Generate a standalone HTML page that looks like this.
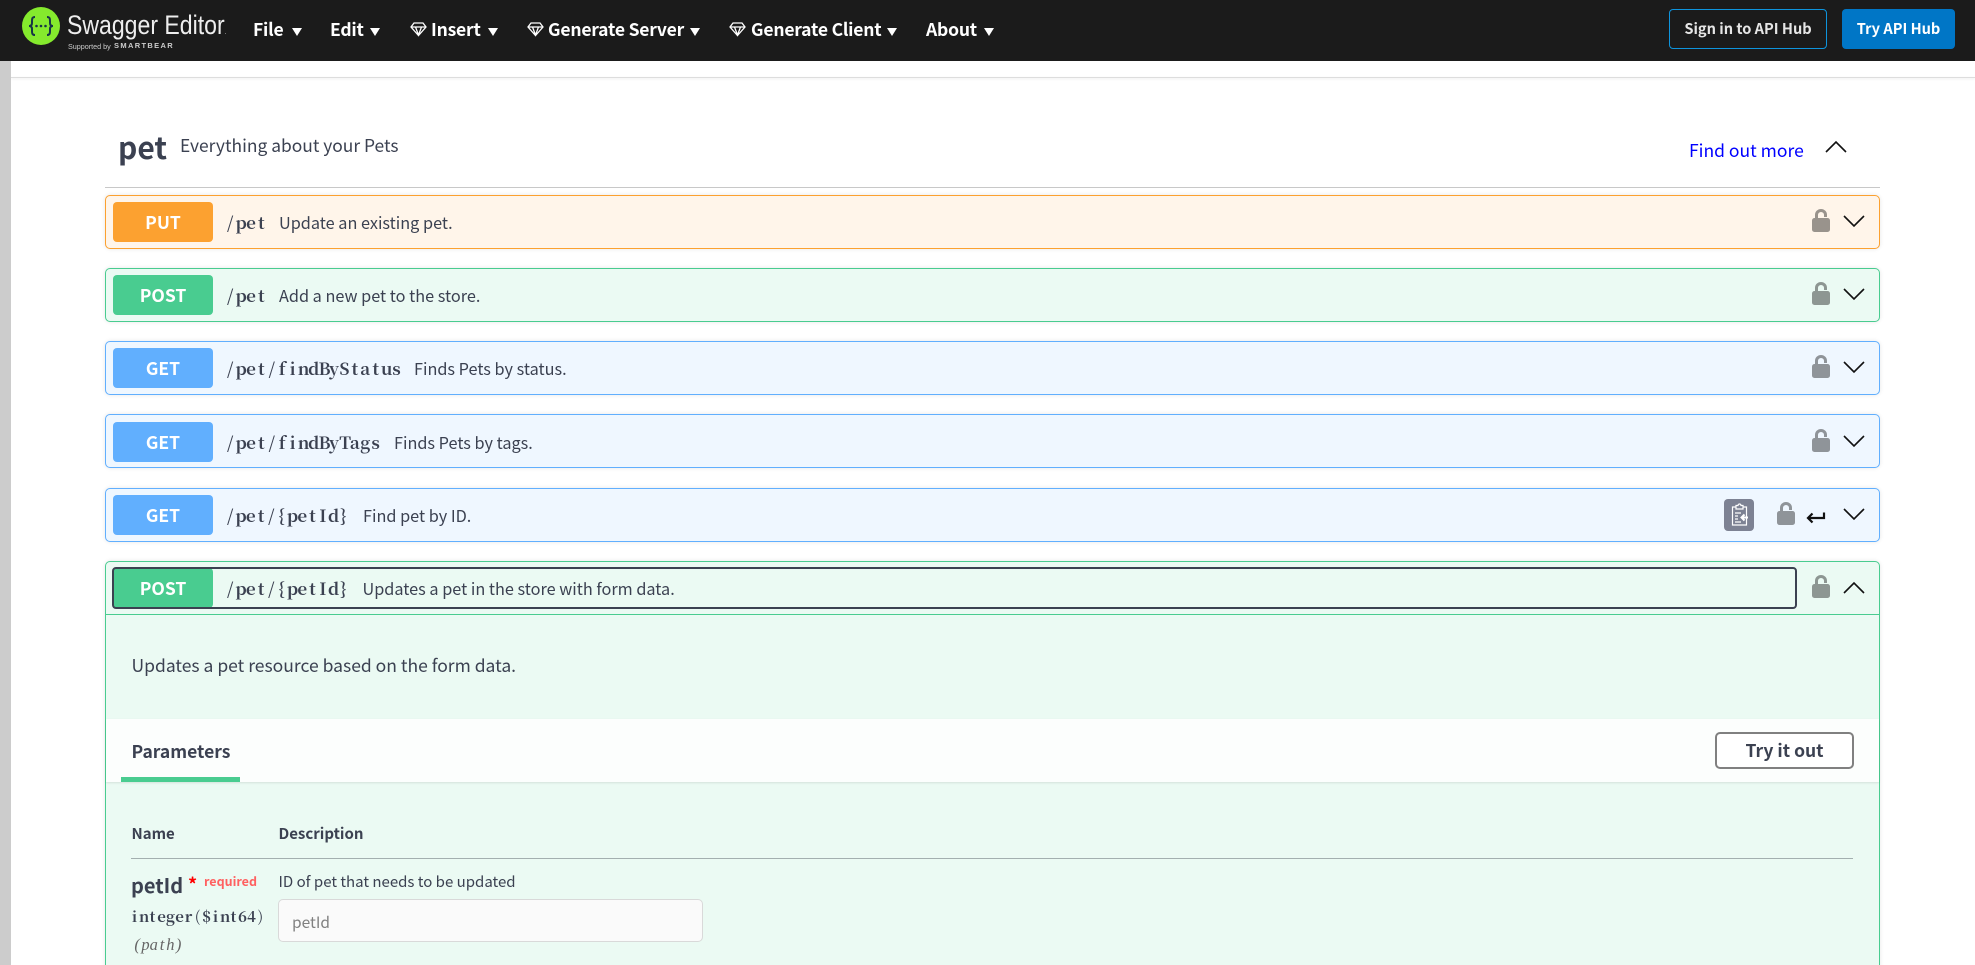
<!DOCTYPE html>
<html><head><meta charset="utf-8"><title>Swagger Editor</title>
<style>
html,body{margin:0;padding:0;width:1975px;height:965px;overflow:hidden;background:#fff}
body{position:relative;font-family:"Noto Sans CJK SC","Liberation Sans",sans-serif;color:#3b4151}
.a,.a *{box-sizing:border-box}
.a{position:absolute}
.t{position:absolute;white-space:nowrap;line-height:24px;height:24px}
.nav{left:0;top:0;width:1975px;height:61px;background:#1b1b1b}
.n{color:#fff;font-weight:700;font-size:17.5px;top:18px;letter-spacing:-.2px}
.op{left:105px;width:1775px;height:54px;border:1.5px solid;border-radius:5px;box-shadow:0 0 4px rgba(0,0,0,.1)}
.m{position:absolute;left:113px;width:100px;height:40px;border-radius:4px;color:#fff;font-weight:700;font-size:17.5px;line-height:42px;text-align:center}
.p{font-family:"Noto Serif CJK SC","Liberation Serif",serif;font-weight:700;font-size:17px;left:225px;color:#3b4151}
.c i{display:inline-block;font-style:inherit;text-align:center;width:10.4px}
.c.w i{width:10.3px}
.c.k i{width:9px}
.c.h i{width:8.3px}
.s{font-size:16.25px;color:#3b4151}
.put{background:#fff5ea;border-color:#fca130}.bput{background:#fca130}
.post{background:#ebfaf3;border-color:#49cc90}.bpost{background:#49cc90}
.get{background:#eff7ff;border-color:#61affe}.bget{background:#61affe}
svg{position:absolute;overflow:visible}
.tri{position:absolute;top:28px;width:0;height:0;border-left:5px solid transparent;border-right:5px solid transparent;border-top:8px solid #fff}
</style></head><body>

<div class="a nav"></div>
<svg style="left:22px;top:7px" width="38" height="38" viewBox="0 0 38 38"><circle cx="19" cy="19" r="19" fill="#85ea2d"/><path d="M13 10c-3 0-3 2-3 4v2c0 2-1 3-3 3 2 0 3 1 3 3v2c0 2 0 4 3 4M25 10c3 0 3 2 3 4v2c0 2 1 3 3 3-2 0-3 1-3 3v2c0 2 0 4-3 4" fill="none" stroke="#173647" stroke-width="2"/><circle cx="14.500" cy="19" r="1.300" fill="#173647"/><circle cx="19" cy="19" r="1.300" fill="#173647"/><circle cx="23.500" cy="19" r="1.300" fill="#173647"/></svg>
<div class="t" style="left:67px;top:13px;color:#eee;font-family:'Liberation Sans',sans-serif;font-size:26.5px;transform:scaleX(.87);transform-origin:0 0">Swagger Editor<span style="font-size:6px">.</span></div>
<div class="t" style="left:68px;top:35px;color:#ccc;font-family:'Liberation Sans',sans-serif;font-size:7.2px">Supported by</div>
<div class="t" style="left:114px;top:34px;color:#ccc;font-family:'Liberation Sans',sans-serif;font-weight:700;font-size:7.5px;letter-spacing:1.35px">SMARTBEAR</div>

<div class="t n" style="left:253px">File</div><div class="tri" style="left:292px"></div>
<div class="t n" style="left:330px">Edit</div><div class="tri" style="left:370px"></div>
<svg style="left:410px;top:22px" width="17" height="14" viewBox="0 0 17 14"><path d="M4 1h9l3 4-7.500 8.500L1 5zM1 5h15M5.500 5l3 8 3-8" fill="none" stroke="#fff" stroke-width="1.300"/></svg>
<div class="t n" style="left:431px">Insert</div><div class="tri" style="left:488px"></div>
<svg style="left:527px;top:22px" width="17" height="14" viewBox="0 0 17 14"><path d="M4 1h9l3 4-7.500 8.500L1 5zM1 5h15M5.500 5l3 8 3-8" fill="none" stroke="#fff" stroke-width="1.300"/></svg>
<div class="t n" style="left:548px">Generate Server</div><div class="tri" style="left:690px"></div>
<svg style="left:729px;top:22px" width="17" height="14" viewBox="0 0 17 14"><path d="M4 1h9l3 4-7.500 8.500L1 5zM1 5h15M5.500 5l3 8 3-8" fill="none" stroke="#fff" stroke-width="1.300"/></svg>
<div class="t n" style="left:751px">Generate Client</div><div class="tri" style="left:887px"></div>
<div class="t n" style="left:926px">About</div><div class="tri" style="left:984px"></div>

<div class="a" style="left:1669px;top:9px;width:158px;height:40px;border:1px solid #0e94dd;border-radius:4px;color:#e6e6e6;font-weight:700;font-size:14.6px;line-height:38px;text-align:center">Sign in to API Hub</div>
<div class="a" style="left:1842px;top:9px;width:113px;height:40px;background:#0076c6;border-radius:4px;color:#fff;font-weight:700;font-size:14.6px;line-height:40px;text-align:center">Try API Hub</div>

<div class="a" style="left:0;top:61px;width:11px;height:904px;background:#ccc"></div>
<div class="a" style="left:11px;top:77px;width:1964px;height:1px;background:#ddd;box-shadow:0 1px 2px rgba(0,0,0,.1)"></div>

<div class="t" style="left:118px;top:134px;font-size:30px;font-weight:700;line-height:24px">pet</div>
<div class="t" style="left:180px;top:134px;font-size:17.4px">Everything about your Pets</div>
<div class="t" style="left:1689px;top:139px;font-size:17.5px;color:#00f">Find out more</div>
<svg style="left:1825px;top:140px" width="22" height="13" viewBox="0 0 22 13"><path d="M1 12 11 2l10 10" fill="none" stroke="#111" stroke-width="1.600"/></svg>
<div class="a" style="left:105px;top:187px;width:1775px;height:1px;background:#c8c8c8"></div>

<!-- PUT -->
<div class="a op put" style="top:195px"></div>
<div class="m bput" style="top:202px">PUT</div>
<div class="t p c" style="top:210px"><i>/</i><i>p</i><i>e</i><i>t</i></div>
<div class="t s" style="left:279px;top:210px">Update an existing pet.</div>
<svg style="left:1812px;top:209px" width="18" height="23" viewBox="0 0 18 23"><path d="M4.500 9V5.800a4.500 4.300 0 0 1 9 0V8" fill="none" stroke="#000" stroke-opacity=".4" stroke-width="3"/><rect x="0" y="9" width="18" height="14" rx="2.500" fill="#000" fill-opacity=".4"/></svg>
<svg style="left:1843px;top:215px" width="22" height="13" viewBox="0 0 22 13"><path d="M1 1l10 10L21 1" fill="none" stroke="#111" stroke-width="1.600"/></svg>

<!-- POST -->
<div class="a op post" style="top:268px"></div>
<div class="m bpost" style="top:275px">POST</div>
<div class="t p c" style="top:283px"><i>/</i><i>p</i><i>e</i><i>t</i></div>
<div class="t s" style="left:279px;top:283px">Add a new pet to the store.</div>
<svg style="left:1812px;top:282px" width="18" height="23" viewBox="0 0 18 23"><path d="M4.500 9V5.800a4.500 4.300 0 0 1 9 0V8" fill="none" stroke="#000" stroke-opacity=".4" stroke-width="3"/><rect x="0" y="9" width="18" height="14" rx="2.500" fill="#000" fill-opacity=".4"/></svg>
<svg style="left:1843px;top:288px" width="22" height="13" viewBox="0 0 22 13"><path d="M1 1l10 10L21 1" fill="none" stroke="#111" stroke-width="1.600"/></svg>

<!-- GET findByStatus -->
<div class="a op get" style="top:341px"></div>
<div class="m bget" style="top:348px">GET</div>
<div class="t p c" style="top:356px"><i>/</i><i>p</i><i>e</i><i>t</i><i>/</i><i>f</i><i>i</i><i>n</i><i>d</i><i>B</i><i>y</i><i>S</i><i>t</i><i>a</i><i>t</i><i>u</i><i>s</i></div>
<div class="t s" style="left:414px;top:356px">Finds Pets by status.</div>
<svg style="left:1812px;top:355px" width="18" height="23" viewBox="0 0 18 23"><path d="M4.500 9V5.800a4.500 4.300 0 0 1 9 0V8" fill="none" stroke="#000" stroke-opacity=".4" stroke-width="3"/><rect x="0" y="9" width="18" height="14" rx="2.500" fill="#000" fill-opacity=".4"/></svg>
<svg style="left:1843px;top:361px" width="22" height="13" viewBox="0 0 22 13"><path d="M1 1l10 10L21 1" fill="none" stroke="#111" stroke-width="1.600"/></svg>

<!-- GET findByTags -->
<div class="a op get" style="top:414px"></div>
<div class="m bget" style="top:422px">GET</div>
<div class="t p c" style="top:430px"><i>/</i><i>p</i><i>e</i><i>t</i><i>/</i><i>f</i><i>i</i><i>n</i><i>d</i><i>B</i><i>y</i><i>T</i><i>a</i><i>g</i><i>s</i></div>
<div class="t s" style="left:394px;top:430px">Finds Pets by tags.</div>
<svg style="left:1812px;top:429px" width="18" height="23" viewBox="0 0 18 23"><path d="M4.500 9V5.800a4.500 4.300 0 0 1 9 0V8" fill="none" stroke="#000" stroke-opacity=".4" stroke-width="3"/><rect x="0" y="9" width="18" height="14" rx="2.500" fill="#000" fill-opacity=".4"/></svg>
<svg style="left:1843px;top:435px" width="22" height="13" viewBox="0 0 22 13"><path d="M1 1l10 10L21 1" fill="none" stroke="#111" stroke-width="1.600"/></svg>

<!-- GET petId -->
<div class="a op get" style="top:488px"></div>
<div class="m bget" style="top:495px">GET</div>
<div class="t p c w" style="top:503px"><i>/</i><i>p</i><i>e</i><i>t</i><i>/</i><i>{</i><i>p</i><i>e</i><i>t</i><i>I</i><i>d</i><i>}</i></div>
<div class="t s" style="left:363px;top:503px">Find pet by ID.</div>
<div class="a" style="left:1724px;top:499px;width:30px;height:32px;background:#7d8293;border-radius:4px"></div>
<svg style="left:1731px;top:504px" width="17" height="22" viewBox="0 0 17 22"><path d="M5 3H1.500v18h14V3H12M5 1.500h2a1.500 1.500 0 0 1 3 0h2V5H5zM4 9h6M4 12h3M4 15h3M4 18h6" fill="none" stroke="#fff" stroke-width="1.200"/><path d="M17 13.500H11M13.500 10.500l-3 3 3 3" fill="none" stroke="#fff" stroke-width="2"/></svg>
<svg style="left:1777px;top:502px" width="18" height="23" viewBox="0 0 18 23"><path d="M4.500 9V5.800a4.500 4.300 0 0 1 9 0V8" fill="none" stroke="#000" stroke-opacity=".4" stroke-width="3"/><rect x="0" y="9" width="18" height="14" rx="2.500" fill="#000" fill-opacity=".4"/></svg>
<svg style="left:1806px;top:512px" width="19" height="12" viewBox="0 0 19 12"><path d="M18 .5v5.500H2M6.500 1.500 2 6l4.500 4.500" fill="none" stroke="#111" stroke-width="2.200"/></svg>
<svg style="left:1843px;top:508px" width="22" height="13" viewBox="0 0 22 13"><path d="M1 1l10 10L21 1" fill="none" stroke="#111" stroke-width="1.600"/></svg>

<!-- POST expanded -->
<div class="a op post" style="top:561px;height:420px"></div>
<div class="a" style="left:106px;top:614px;width:1773px;height:1px;background:#49cc90"></div>
<div class="m bpost" style="top:568px">POST</div>
<div class="a" style="left:112px;top:567px;width:1685px;height:42px;border:2px solid #3b4151;border-radius:4px"></div>
<div class="t p c w" style="top:576px"><i>/</i><i>p</i><i>e</i><i>t</i><i>/</i><i>{</i><i>p</i><i>e</i><i>t</i><i>I</i><i>d</i><i>}</i></div>
<div class="t s" style="left:362.500px;top:575.500px">Updates a pet in the store with form data.</div>
<svg style="left:1812px;top:575px" width="18" height="23" viewBox="0 0 18 23"><path d="M4.500 9V5.800a4.500 4.300 0 0 1 9 0V8" fill="none" stroke="#000" stroke-opacity=".4" stroke-width="3"/><rect x="0" y="9" width="18" height="14" rx="2.500" fill="#000" fill-opacity=".4"/></svg>
<svg style="left:1843px;top:581px" width="22" height="13" viewBox="0 0 22 13"><path d="M1 12 11 2l10 10" fill="none" stroke="#111" stroke-width="1.600"/></svg>

<div class="t" style="left:131.500px;top:654px;font-size:17.5px">Updates a pet resource based on the form data.</div>

<div class="a" style="left:106px;top:719px;width:1773px;height:63px;background:#fcfefd;box-shadow:0 1px 2px rgba(0,0,0,.1)"></div>
<div class="t" style="left:131.500px;top:740px;font-size:17.5px;font-weight:700">Parameters</div>
<div class="a" style="left:121px;top:777px;width:119px;height:5px;background:#49cc90"></div>
<div class="a" style="left:1715px;top:732px;width:139px;height:37px;border:2px solid #808080;border-radius:5px;background:#fff;font-size:17.5px;font-weight:700;line-height:33px;text-align:center">Try it out</div>

<div class="t" style="left:131.500px;top:822px;font-size:15px;font-weight:700">Name</div>
<div class="t" style="left:278.500px;top:822px;font-size:15px;font-weight:700">Description</div>
<div class="a" style="left:131px;top:858px;width:1722px;height:1px;background:#a3afaf"></div>

<div class="t" style="left:131px;top:873px;font-size:20px;font-weight:700">petId</div>
<div class="t" style="left:188px;top:872px;font-size:18px;font-weight:700;color:#f00">*</div>
<div class="t" style="left:204px;top:869px;font-size:12.5px;font-weight:700;color:#ff6060">required</div>
<div class="t c k" style="left:130px;top:905px;font-size:15px;font-weight:700;font-family:'Noto Serif CJK SC','Liberation Serif',serif"><i>i</i><i>n</i><i>t</i><i>e</i><i>g</i><i>e</i><i>r</i><i style="font-weight:400">(</i><i>$</i><i>i</i><i>n</i><i>t</i><i>6</i><i>4</i><i style="font-weight:400">)</i></div>
<div class="t c h" style="left:133px;top:933px;font-size:16.5px;font-family:'Liberation Serif',serif;font-style:italic;color:#666"><i>(</i><i>p</i><i>a</i><i>t</i><i>h</i><i>)</i></div>
<div class="t" style="left:278.500px;top:870px;font-size:15px">ID of pet that needs to be updated</div>
<div class="a" style="left:278px;top:899px;width:425px;height:43px;border:1px solid #d9d9d9;border-radius:5px;background:#fafafa"></div>
<div class="t" style="left:292px;top:910px;font-size:15.5px;color:#808080">petId</div>

</body></html>
